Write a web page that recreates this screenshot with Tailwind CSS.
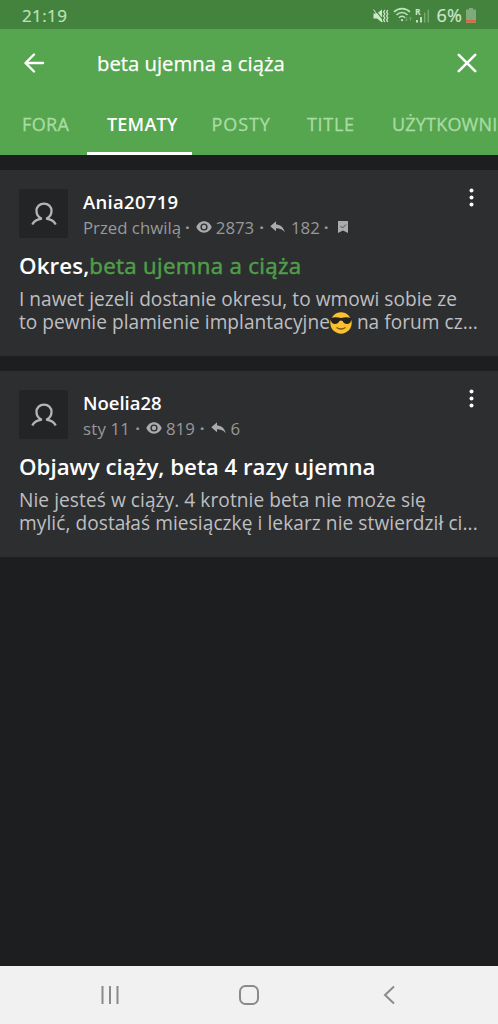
<!DOCTYPE html>
<html lang="pl">
<head>
<meta charset="utf-8">
<title>Wyszukiwanie</title>
<script src="https://cdn.jsdelivr.net/npm/@tailwindcss/browser@4"></script>
</head>
<body class="w-[498px] h-[1024px] overflow-hidden bg-[#1d1e20] font-['Open_Sans','Noto_Sans',sans-serif] flex flex-col whitespace-nowrap">
<svg class="hidden">
  <symbol id="user" viewBox="0 0 26 24"><path d="M1.300 22.500C3 19 6 17.300 10.800 16.700 7.300 15.300 5.500 12.300 5.500 9c0-4.300 3.200-7.400 7.500-7.400S20.500 4.700 20.500 9c0 3.300-1.800 6.300-5.300 7.700 4.800.6 7.800 2.300 9.500 5.800" fill="none" stroke="currentColor" stroke-width="2.300"/></symbol>
  <symbol id="eye" viewBox="0 0 16 12"><path fill="currentColor" fill-rule="evenodd" d="M8 .3C4.500.3 1.600 2.600.3 6 1.600 9.400 4.500 11.700 8 11.700S14.400 9.400 15.700 6C14.400 2.600 11.500.3 8 .3zM8 9.600a3.600 3.600 0 1 1 0-7.200 3.600 3.600 0 0 1 0 7.200zm0-1.400a2.200 2.200 0 1 0 0-4.400 2.200 2.200 0 0 0 0 4.400z"/></symbol>
  <symbol id="reply" viewBox="0 0 15 12"><path fill="currentColor" d="M6 3.300V.3L.3 5.300 6 10.300V7.300c4 0 6.500 1 8.700 4C14 7.500 11.500 4 6 3.300z"/></symbol>
  <symbol id="more" viewBox="0 0 5 19"><g fill="#fff"><circle cx="2.500" cy="2.500" r="2"/><circle cx="2.500" cy="9.500" r="2"/><circle cx="2.500" cy="16.500" r="2"/></g></symbol>
</svg>

<div class="h-[29px] shrink-0 bg-[#43833e] text-[#bfe3b9] flex items-center pl-[22px] pr-[22px] pt-[2px]">
  <span class="text-[17px] tracking-[0.4px] [-webkit-text-stroke:0.2px]">21:19</span>
  <svg class="ml-auto" width="16" height="16" viewBox="0 0 16 16" fill="none" stroke="#cfe8ca"><path d="M.5 5.500h3.500l5-4v13l-5-4H.5z" fill="#cfe8ca" stroke="none"/><path d="M1.500 1l9.500 12" stroke="#43833e" stroke-width="1.200"/><path d="M.5 1.500l9 12.500" stroke-width="1"/><path d="M11.800 2l-1.200 2 1.200 2-1.200 2 1.200 2-1.200 2 1.200 2M14.800 2l-1.200 2 1.200 2-1.200 2 1.200 2-1.200 2 1.200 2" stroke-width="1.300"/></svg>
  <svg class="ml-[4px] -mt-[2px]" width="20" height="16" viewBox="0 0 20 16" fill="none" stroke="#bfe3b9" stroke-width="1.600"><path d="M1 5C5.500.5 12.500.5 17 5M3.500 8c3.200-3.400 7.800-3.400 11 0M6 10.800c1.800-2 4.200-2 6 0"/><circle cx="9" cy="13.200" r="1.100" fill="#bfe3b9" stroke="none"/><path d="M13.500 10v4m-1.500-1.500l1.500 1.500 1.500-1.500M17.500 14v-4M16 11.500l1.500-1.500 1.500 1.500" stroke="#6ea269" stroke-width="1"/></svg>
  <svg class="ml-[2px] -mt-[1px]" width="15" height="17" viewBox="0 0 15 17"><text x="0" y="7.500" font-size="8.500" font-weight="700" fill="#cfe8ca">R</text><path d="M2 13v2.500M6 10v5.500" stroke="#cfe8ca" stroke-width="1.800"/><path d="M9.700 5.500v10M13.300 2.500v13" stroke="#75a970" stroke-width="1.500"/></svg>
  <span class="ml-[6px] text-[18px] leading-[24px] tracking-[0.2px] text-[#cfe8ca] -mt-[1px] [-webkit-text-stroke:0.2px]">6%</span>
  <svg class="ml-[4px]" width="10" height="15" viewBox="0 0 10 15"><path d="M3 0h4v1.500h3V15H0V1.500h3z" fill="#7eab79"/><path d="M0 12h10v2.500H0z" fill="#e8623f"/></svg>
</div>

<header class="h-[126px] shrink-0 bg-[#56a54f] text-white flex flex-col">
  <div class="h-[68px] flex items-center pl-[24px] pr-[21px]">
    <svg width="21" height="20" viewBox="0 0 21 20" fill="none" stroke="#fff" stroke-width="2.400" stroke-linecap="round" stroke-linejoin="round"><path d="M19 10H2M10 1.500L1.500 10l8.500 8.500"/></svg>
    <span class="ml-[52px] text-[20.3px] leading-[28px] [-webkit-text-stroke:0.25px]">beta ujemna a ciąża</span>
    <svg class="ml-auto" width="20" height="20" viewBox="0 0 20 20" fill="none" stroke="#fff" stroke-width="2.600" stroke-linecap="round"><path d="M1.800 1.800l16.400 16.400M18.200 1.800L1.800 18.200"/></svg>
  </div>
  <nav class="flex h-[58px] text-[18px] leading-[54px] text-[#a8dca2]">
    <span class="w-[87px] pl-[22px] tracking-[0.4px] [-webkit-text-stroke:0.35px]">FORA</span>
    <span class="w-[105px] pl-[20px] text-white font-semibold tracking-[0.2px] border-b-[3px] border-white">TEMATY</span>
    <span class="w-[115px] pl-[19.5px] tracking-[0.9px] [-webkit-text-stroke:0.35px]">POSTY</span>
    <span class="w-[85px] tracking-[0.7px] [-webkit-text-stroke:0.35px]">TITLE</span>
    <span class="tracking-[0.2px] [-webkit-text-stroke:0.35px]">UŻYTKOWNI</span>
  </nav>
</header>

<main class="flex-1 pt-[15px] flex flex-col gap-[15px]">
  <article class="h-[186px] bg-[#2d2e30] pt-[19px] pl-[19px]">
    <div class="flex h-[50px]">
      <div class="size-[49px] rounded-[2px] bg-[#232426] text-[#b5b5b5] grid place-items-center"><svg width="26" height="24"><use href="#user"/></svg></div>
      <div class="ml-[15px]">
        <div class="text-[18.5px] leading-[26px] tracking-[0.3px] font-semibold text-white">Ania20719</div>
        <div class="flex items-center text-[16.8px] leading-[26px] text-[#98999b]"><span>Przed chwilą</span><span class="ml-[4px] font-bold -mt-[2px]">·</span><svg class="ml-[6px] -mt-[2px] text-[#aaabac]" width="16" height="12"><use href="#eye"/></svg><span class="ml-[4px]">2873</span><span class="ml-[5px] font-bold -mt-[2px]">·</span><svg class="ml-[6px] -mt-[2px] text-[#aaabac]" width="15" height="12"><use href="#reply"/></svg><span class="ml-[6px]">182</span><span class="ml-[4px] font-bold -mt-[2px]">·</span><svg class="ml-[9px] -mt-[2px]" width="10" height="12" viewBox="0 0 10 12"><path d="M0 0h10v12L5 9.500 0 12z" fill="#aaabac"/><path d="M2.500 5l2 2 3.500-3.500" fill="none" stroke="#4a4b4d"/></svg></div>
      </div>
      <svg class="ml-auto mr-[24px] -mt-[1px]" width="5" height="19"><use href="#more"/></svg>
    </div>
    <h2 class="mt-[12px] text-[22.3px] leading-[30px] font-semibold text-white tracking-[0.1px]">Okres,<span class="font-normal text-[#4f9f49] tracking-[0.3px] [-webkit-text-stroke:0.5px]">beta ujemna a ciąża</span></h2>
    <p class="mt-[7px] text-[19.1px] leading-[23px] tracking-[0.03px] text-[#bebfc0]">I nawet jezeli dostanie okresu, to wmowi sobie ze<br>to pewnie plamienie implantacyjne<svg class="inline-block align-[-5px]" width="22" height="22" viewBox="0 0 22 22"><circle cx="11" cy="11" r="10.700" fill="#fbc02d"/><path d="M.5 6q5-1.500 10.500 0 5.500-1.500 10.500 0l-.6 3c-.6 4-7 4-8.300 0q-1.600-1.200-3.200 0c-1.300 4-7.700 4-8.300 0z" fill="#24211f"/><path d="M6.500 15.500q4.500 3 9 0" fill="none" stroke="#82501b" stroke-width="1.300"/></svg> na forum cz...</p>
  </article>
  <article class="h-[186px] bg-[#2d2e30] pt-[19px] pl-[19px]">
    <div class="flex h-[50px]">
      <div class="size-[49px] rounded-[2px] bg-[#232426] text-[#b5b5b5] grid place-items-center"><svg width="26" height="24"><use href="#user"/></svg></div>
      <div class="ml-[15px]">
        <div class="text-[18.5px] leading-[26px] font-semibold text-white">Noelia28</div>
        <div class="flex items-center text-[16.8px] leading-[26px] text-[#98999b]"><span class="tracking-[0.2px]">sty 11</span><span class="ml-[5px] font-bold -mt-[2px]">·</span><svg class="ml-[6px] -mt-[2px] text-[#aaabac]" width="16" height="12"><use href="#eye"/></svg><span class="ml-[4px]">819</span><span class="ml-[5px] font-bold -mt-[2px]">·</span><svg class="ml-[6px] -mt-[2px] text-[#aaabac]" width="15" height="12"><use href="#reply"/></svg><span class="ml-[5px]">6</span></div>
      </div>
      <svg class="ml-auto mr-[24px] -mt-[1px]" width="5" height="19"><use href="#more"/></svg>
    </div>
    <h2 class="mt-[12px] text-[22.3px] leading-[30px] font-semibold text-white">Objawy ciąży, beta 4 razy ujemna</h2>
    <p class="mt-[7px] text-[19.1px] leading-[23px] tracking-[0.07px] text-[#bebfc0]">Nie jesteś w ciąży. 4 krotnie beta nie może się<br>mylić, dostałaś miesiączkę i lekarz nie stwierdził ci...</p>
  </article>
</main>

<footer class="h-[58px] shrink-0 bg-[#f1f1f1] grid grid-cols-[20px_20px_12px] items-center justify-between pl-[100px] pr-[103px]">
  <svg width="20" height="20" viewBox="0 0 20 20" stroke="#8a8a8a" stroke-width="2"><path d="M2.500 1v18M10 1v18M17.500 1v18"/></svg>
  <svg class="-ml-[3px]" width="20" height="20" viewBox="0 0 20 20" fill="none" stroke="#8a8a8a" stroke-width="2"><rect x="1" y="1" width="18" height="18" rx="5.500"/></svg>
  <svg width="12" height="20" viewBox="0 0 12 20" fill="none" stroke="#8a8a8a" stroke-width="2"><path d="M11 1.500L2 10l9 8.500"/></svg>
</footer>
</body>
</html>
